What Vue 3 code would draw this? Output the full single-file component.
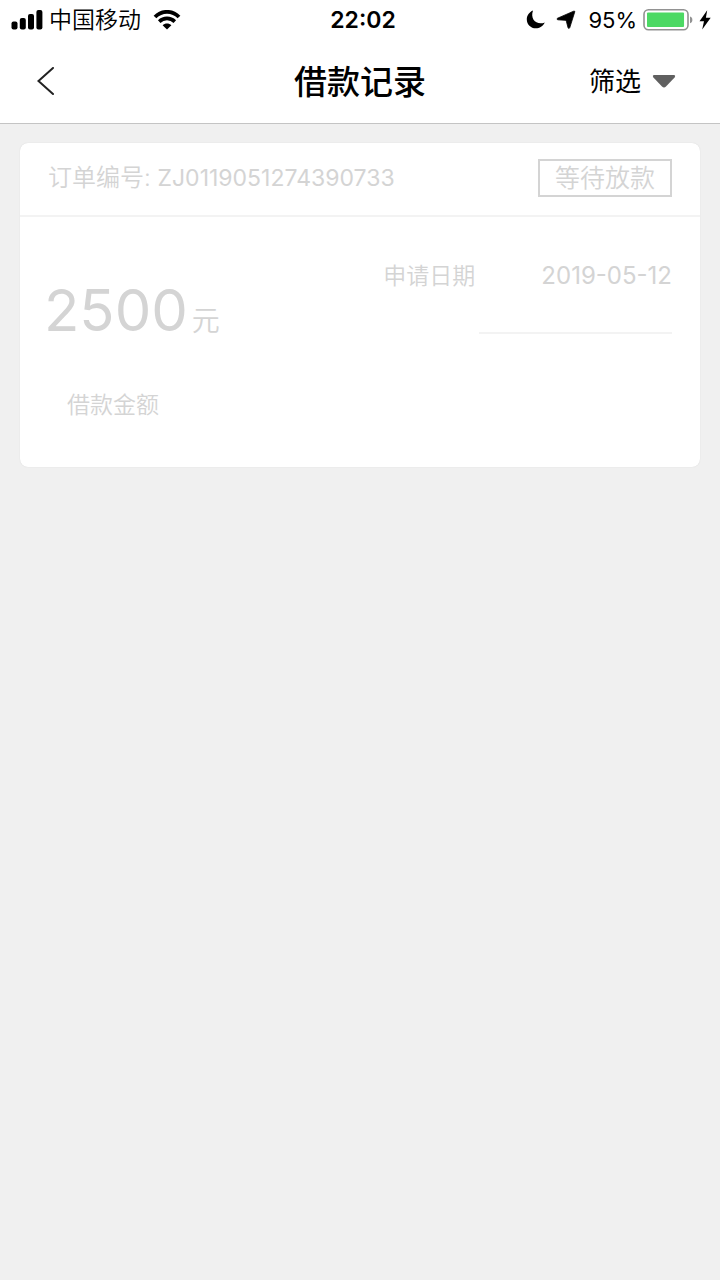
<template>
  <div class="page">
    <header class="top">
      <div class="status-bar">
        <div class="status-left">
          <svg class="signal" viewBox="0 0 32 20" width="32" height="20">
            <rect x="0.5" y="11.5" width="6" height="8" rx="2" />
            <rect x="8.8" y="8" width="6" height="11.5" rx="2" />
            <rect x="17" y="4" width="6" height="15.5" rx="2" />
            <rect x="25.4" y="0" width="6" height="19.5" rx="2" />
          </svg>
          <span class="carrier">中国移动</span>
          <svg class="wifi" viewBox="0 0 28 20" width="28" height="20">
            <path d="M2 7C8.7 0.1 19.3 0.1 26 7" fill="none" stroke="#000" stroke-width="3.8" />
            <path d="M6.2 11.6C10.6 7.3 17.4 7.3 21.8 11.6" fill="none" stroke="#000" stroke-width="3.6" />
            <path d="M9.6 15.2C12 12.9 16 12.9 18.4 15.2L14 19.4Z" />
          </svg>
        </div>
        <span class="time">22:02</span>
        <div class="status-right">
          <svg viewBox="0 0 20 20" width="20" height="20">
            <path d="M7 0.4C3.8 9.2 10.8 15.6 18.8 12.4C17 16 13.6 18.2 9.8 18.2C4.8 18.2 0.8 14.4 0.8 9.4C0.8 5.4 3.4 1.8 7 0.4Z" />
          </svg>
          <svg class="location" viewBox="0 0 20 20" width="20" height="20">
            <path d="M17.6 1.2C18.4 0.8 19 1.3 18.7 2.1L13.8 17.6C13.4 18.7 12.3 18.7 12 17.6L10.4 11.4Q10.2 10.4 9.2 10.3L1.9 9.8C0.8 9.6 0.7 8.6 1.6 8.2Z" stroke="#000" stroke-width="0.8" />
          </svg>
          <span class="percent">{{ battery }}%</span>
          <svg class="battery" viewBox="0 0 50 22" width="50" height="22">
            <rect x="1" y="0.8" width="44" height="20" rx="4.5" fill="#fff" stroke="#929292" stroke-width="1.6" />
            <rect x="4" y="3.5" :width="battery * 0.39" height="14.6" rx="1" fill="#4cd964" />
            <path d="M47 7.5C50.2 8.5 50.2 13.3 47 14.3Z" fill="#929292" />
          </svg>
          <svg class="bolt" viewBox="0 0 12 20" width="12" height="20">
            <path d="M8.2 0.2L0.5 11.2H5L3.2 19.5L11.7 7.8H6.9Z" />
          </svg>
        </div>
      </div>

      <nav class="nav-bar">
        <button class="back" type="button" aria-label="返回">
          <svg viewBox="0 0 18 30" width="18" height="30">
            <path d="M16 1L1.5 14L16 27" fill="none" stroke="#222" stroke-width="2" stroke-linecap="round" />
          </svg>
        </button>
        <h1>借款记录</h1>
        <button class="filter" type="button">
          筛选
          <svg viewBox="0 0 24 14" width="24" height="14">
            <path d="M2.2 0H21.8Q24 0.2 22.6 2.4L14 11.6Q12 13.4 10 11.6L1.4 2.4Q0 0.2 2.2 0Z" fill="#606060" />
          </svg>
        </button>
      </nav>
    </header>

    <main class="list">
      <article v-for="order in orders" :key="order.id" class="card">
        <div class="card-head">
          <span class="order-no">订单编号: <span class="number">{{ order.id }}</span></span>
          <span class="state">{{ order.state }}</span>
        </div>
        <div class="card-body">
          <div class="amount">
            <p class="money">{{ order.amount }}<span class="unit">元</span></p>
            <p class="label">借款金额</p>
          </div>
          <div class="detail">
            <p class="date"><span>申请日期</span><span class="day">{{ order.date }}</span></p>
            <div class="line"></div>
          </div>
        </div>
      </article>
    </main>
  </div>
</template>

<script setup>
import { ref } from 'vue'

const battery = ref(95)
const orders = ref([
  { id: 'ZJ0119051274390733', state: '等待放款', amount: 2500, date: '2019-05-12' }
])
</script>

<style>
body {
  margin: 0;
  background: #f0f0f0;
}
</style>

<style scoped>
.page {
  min-height: 100vh;
  background: #f0f0f0;
  color: #000;
  font-family: Inter, "Noto Sans CJK SC", sans-serif;
}
svg {
  display: block;
  flex: none;
}
p, h1 {
  margin: 0;
}
button {
  border: 0;
  padding: 0;
  background: none;
  color: inherit;
  font-family: inherit;
  cursor: pointer;
}

/* status bar and title */
.top {
  background: #fff;
  border-bottom: 1px solid #c4c4c4;
}
.status-bar {
  display: grid;
  grid-template-columns: 1fr auto 1fr;
  align-items: center;
  height: 40px;
  padding: 0 9px 0 11px;
  font-size: 23px;
  line-height: 34px;
}
.status-left, .status-right {
  display: flex;
  align-items: center;
}
.carrier {
  margin: 0 12px 0 6px;
  font-weight: 350;
}
.time {
  margin-left: 4px;
  font-weight: 600;
}
.status-right {
  justify-content: flex-end;
}
.location {
  margin: 0 12px 0 10px;
}
.percent {
  font-size: 22px;
}
.battery {
  margin: 0 6px;
}
.nav-bar {
  display: grid;
  grid-template-columns: 1fr auto 1fr;
  align-items: center;
  height: 83px;
  padding: 0 37px;
}
.back {
  justify-self: start;
}
h1 {
  font-size: 33px;
  line-height: 40px;
  font-weight: 500;
}
.filter {
  display: flex;
  align-items: center;
  justify-self: end;
  gap: 11px;
  padding-right: 7px;
  font-size: 26px;
  line-height: 32px;
}

/* order cards */
.list {
  padding: 19px 20px;
}
.card {
  background: #fff;
  border-radius: 8px;
  box-shadow: 0 0 1px #ccc;
  color: #d4d4d4;
  font-size: 23px;
  font-weight: 350;
  line-height: 32px;
}
.card-head {
  display: flex;
  align-items: center;
  justify-content: space-between;
  height: 70px;
  padding: 0 28px 2px;
  border-bottom: 2px solid #f3f3f3;
}
.order-no {
  font-size: 24px;
}
.number {
  font-size: 23px;
  font-weight: 400;
}
.state {
  padding: 1px 15px;
  border: 2px solid #d4d4d4;
  font-size: 25px;
}
.card-body {
  display: flex;
  justify-content: space-between;
  align-items: flex-start;
  padding: 43px 28px 46px 24px;
}
.money {
  font-size: 58px;
  font-weight: 400;
  line-height: 100px;
}
.unit {
  margin-left: 4px;
  font-size: 28px;
  font-weight: 350;
}
.label {
  margin-top: 18px;
  padding-left: 23px;
}
.date {
  display: flex;
  gap: 66px;
}
.day {
  font-size: 24px;
  font-weight: 400;
}
.line {
  height: 2px;
  margin: 40px 0 0 96px;
  background: #f3f3f3;
}
</style>
